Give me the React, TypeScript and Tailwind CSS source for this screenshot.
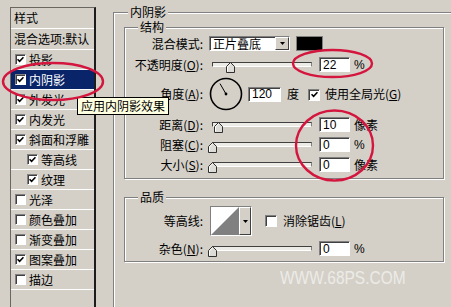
import React from "react";

const sunken =
  "border border-t-[#808080] border-l-[#808080] border-r-white border-b-white shadow-[inset_1px_1px_0_#404040]";
const raised =
  "border border-t-white border-l-white border-r-[#404040] border-b-[#404040] bg-[#d4d0c8]";
const etched = "border border-[#808080] shadow-[inset_1px_1px_0_#fff,1px_1px_0_#fff]";

function Check({ on, big }: { on: boolean; big?: boolean }) {
  return (
    <span
      className={`inline-flex shrink-0 items-center justify-center bg-white ${sunken} ${
        big ? "w-[12px] h-[12px]" : "w-[11px] h-[11px]"
      }`}
    >
      {on && (
        <svg width="7" height="7" viewBox="0 0 7 7">
          <path d="M0.5 3.2 L2.6 5.4 L6.5 1.2" fill="none" stroke="#000" strokeWidth="1.6" />
        </svg>
      )}
    </span>
  );
}

function Field({ value, w = 31 }: { value: string; w?: number }) {
  return (
    <span
      className={`flex h-[15px] shrink-0 items-center bg-white pl-[3px] font-['Liberation_Sans',sans-serif] text-[12px] leading-none ${sunken}`}
      style={{ width: w }}
    >
      {value}
    </span>
  );
}

function Slider({ pos }: { pos: number }) {
  return (
    <div className="relative ml-[5px] h-[15px] w-[108px] shrink-0">
      <div className="absolute left-[4px] top-[5px] h-[5px] w-[100px] bg-[#ecebe6] border border-t-[#404040] border-l-[#404040] border-r-[#808080] border-b-white" />
      <svg className="absolute top-[5px]" style={{ left: pos }} width="9" height="11" viewBox="0 0 9 11">
        <path d="M0.5 4.5 L4.5 0.5 L8.5 4.5 L8.5 10.5 L0.5 10.5 Z" fill="#dedcd6" stroke="#303030" />
        <path d="M1.5 9.5 L1.5 4.9 L4.5 1.9" fill="none" stroke="#fff" />
      </svg>
    </div>
  );
}

function Label({ children }: { children: React.ReactNode }) {
  return <span className="w-[78px] shrink-0 whitespace-nowrap text-right">{children}</span>;
}

const list = [
  { name: "投影", on: true },
  { name: "内阴影", on: true, active: true },
  { name: "外发光", on: true },
  { name: "内发光", on: true },
  { name: "斜面和浮雕", on: true },
  { name: "等高线", on: true, sub: true },
  { name: "纹理", on: true, sub: true },
  { name: "光泽", on: false },
  { name: "颜色叠加", on: false },
  { name: "渐变叠加", on: false },
  { name: "图案叠加", on: true },
  { name: "描边", on: false },
];

export default function App() {
  return (
    <div className="relative flex h-[307px] w-[451px] overflow-hidden bg-[#d4d0c8] font-['Noto_Sans_CJK_SC','Noto_Sans',sans-serif] text-[12px] leading-none text-black">
      {/* style list */}
      <div className="w-[113px] shrink-0 pl-[10px] pt-[7px]">
        <div className="h-[300px] w-[86px] border-t border-l border-[#6a6760] border-r-2 border-r-[#1c1c1c]">
          <div className="flex h-[21px] items-center border-b border-white pl-[3px]">样式</div>
          <div className="flex h-[21px] items-center border-b border-white pl-[3px] whitespace-nowrap">混合选项:默认</div>
          {list.map((s) => (
            <div key={s.name} className="h-[20px] border-b border-white">
              <div
                className={`flex h-[19px] items-center gap-[3px] whitespace-nowrap ${
                  s.sub ? "pl-[16px]" : "pl-[4px]"
                } ${s.active ? "bg-[#0a246a] text-white" : ""}`}
              >
                <Check on={s.on} />
                <span>{s.name}</span>
              </div>
            </div>
          ))}
        </div>
      </div>

      {/* options */}
      <fieldset className={`mt-[6px] h-[320px] w-[350px] shrink-0 ${etched}`}>
        <legend className="ml-[14px] bg-[#d4d0c8] px-[2px] leading-[12px]">内阴影</legend>

        <fieldset className={`ml-[10px] mt-[3px] w-[320px] pb-[6px] ${etched}`}>
          <legend className="ml-[13px] bg-[#d4d0c8] px-[2px] leading-[12px]">结构</legend>

          <div className="mt-[3px] flex h-[15px] items-center">
            <Label>混合模式:</Label>
            <div className={`ml-[6px] flex h-[15px] w-[81px] bg-white ${sunken}`}>
              <span className="flex flex-1 items-center pl-[3px]">正片叠底</span>
              <span className={`flex w-[14px] items-center justify-center ${raised}`}>
                <svg width="5" height="3" viewBox="0 0 5 3">
                  <path d="M0 0 H5 L2.5 3 Z" fill="#000" />
                </svg>
              </span>
            </div>
            <div className="ml-[6px] h-[15px] w-[27px] border border-[#808080] bg-black" />
          </div>

          <div className="mt-[6px] flex h-[15px] items-center">
            <Label>
              不透明度(<u>O</u>):
            </Label>
            <Slider pos={18} />
            <span className="ml-[3px]">
              <Field value="22" />
            </span>
            <span className="ml-[4px] font-['Liberation_Sans',sans-serif]">%</span>
          </div>

          <div className="mt-[5px] flex h-[34px] items-center">
            <Label>
              角度(<u>A</u>):
            </Label>
            <svg className="ml-[6px] shrink-0" width="34" height="34" viewBox="0 0 34 34">
              <circle cx="17" cy="17" r="15.5" fill="none" stroke="#000" strokeWidth="1.6" />
              <line x1="17" y1="17" x2="11" y2="6.6" stroke="#000" strokeWidth="1" />
              <circle cx="17" cy="17" r="1.4" fill="#000" />
            </svg>
            <span className="ml-[5px]">
              <Field value="120" w={33} />
            </span>
            <span className="ml-[6px]">度</span>
            <span className="ml-[9px]">
              <Check on big />
            </span>
            <span className="ml-[5px] whitespace-nowrap">
              使用全局光(<u>G</u>)
            </span>
          </div>

          <div className="mt-[6px] flex h-[15px] items-center">
            <Label>
              距离(<u>D</u>):
            </Label>
            <Slider pos={6} />
            <span className="ml-[3px]">
              <Field value="10" />
            </span>
            <span className="ml-[4px]">像素</span>
          </div>

          <div className="mt-[5px] flex h-[15px] items-center">
            <Label>
              阻塞(<u>C</u>):
            </Label>
            <Slider pos={0} />
            <span className="ml-[3px]">
              <Field value="0" />
            </span>
            <span className="ml-[4px] font-['Liberation_Sans',sans-serif]">%</span>
          </div>

          <div className="mt-[5px] flex h-[15px] items-center">
            <Label>
              大小(<u>S</u>):
            </Label>
            <Slider pos={0} />
            <span className="ml-[3px]">
              <Field value="0" />
            </span>
            <span className="ml-[4px]">像素</span>
          </div>
        </fieldset>

        <fieldset className={`ml-[10px] mt-[12px] w-[320px] pb-[5px] ${etched}`}>
          <legend className="ml-[13px] bg-[#d4d0c8] px-[2px] leading-[12px]">品质</legend>

          <div className="mt-[3px] flex h-[30px] items-center">
            <Label>等高线:</Label>
            <div className={`ml-[7px] flex h-[30px] w-[42px] shrink-0 bg-white ${sunken}`}>
              <svg width="28" height="28" viewBox="0 0 28 28" className="shrink-0">
                <rect width="28" height="28" fill="#fff" />
                <path d="M0 28 L28 0 L28 28 Z" fill="#808080" />
              </svg>
              <span className={`flex flex-1 items-center justify-center ${raised}`}>
                <svg width="5" height="3" viewBox="0 0 5 3">
                  <path d="M0 0 H5 L2.5 3 Z" fill="#000" />
                </svg>
              </span>
            </div>
            <span className="ml-[13px]">
              <Check on={false} big />
            </span>
            <span className="ml-[6px] whitespace-nowrap">
              消除锯齿(<u>L</u>)
            </span>
          </div>

          <div className="mt-[5px] flex h-[15px] items-center">
            <Label>
              杂色(<u>N</u>):
            </Label>
            <Slider pos={0} />
            <span className="ml-[3px]">
              <Field value="0" />
            </span>
            <span className="ml-[4px] font-['Liberation_Sans',sans-serif]">%</span>
          </div>
        </fieldset>

        <div className="ml-[166px] mt-[7px] origin-left scale-x-[0.86] whitespace-nowrap font-['Liberation_Sans',sans-serif] text-[18px] leading-[18px] text-[#ecebe7]">
          WWW.68PS.COM
        </div>
      </fieldset>

      {/* tooltip */}
      <div className="absolute left-[77px] top-[97px] flex h-[18px] items-center border border-black bg-[#ffffe1] px-[3px] whitespace-nowrap">
        应用内阴影效果
      </div>

      {/* red annotation marks */}
      <svg className="pointer-events-none absolute left-0 top-0" width="451" height="307" viewBox="0 0 451 307">
        <g fill="none" stroke="#d4163e" strokeWidth="2.4">
          <ellipse cx="53" cy="81.5" rx="50" ry="18.5" />
          <ellipse cx="332.5" cy="63.5" rx="39.5" ry="13.5" />
          <ellipse cx="334.5" cy="145.5" rx="38.5" ry="35" />
        </g>
      </svg>
    </div>
  );
}
